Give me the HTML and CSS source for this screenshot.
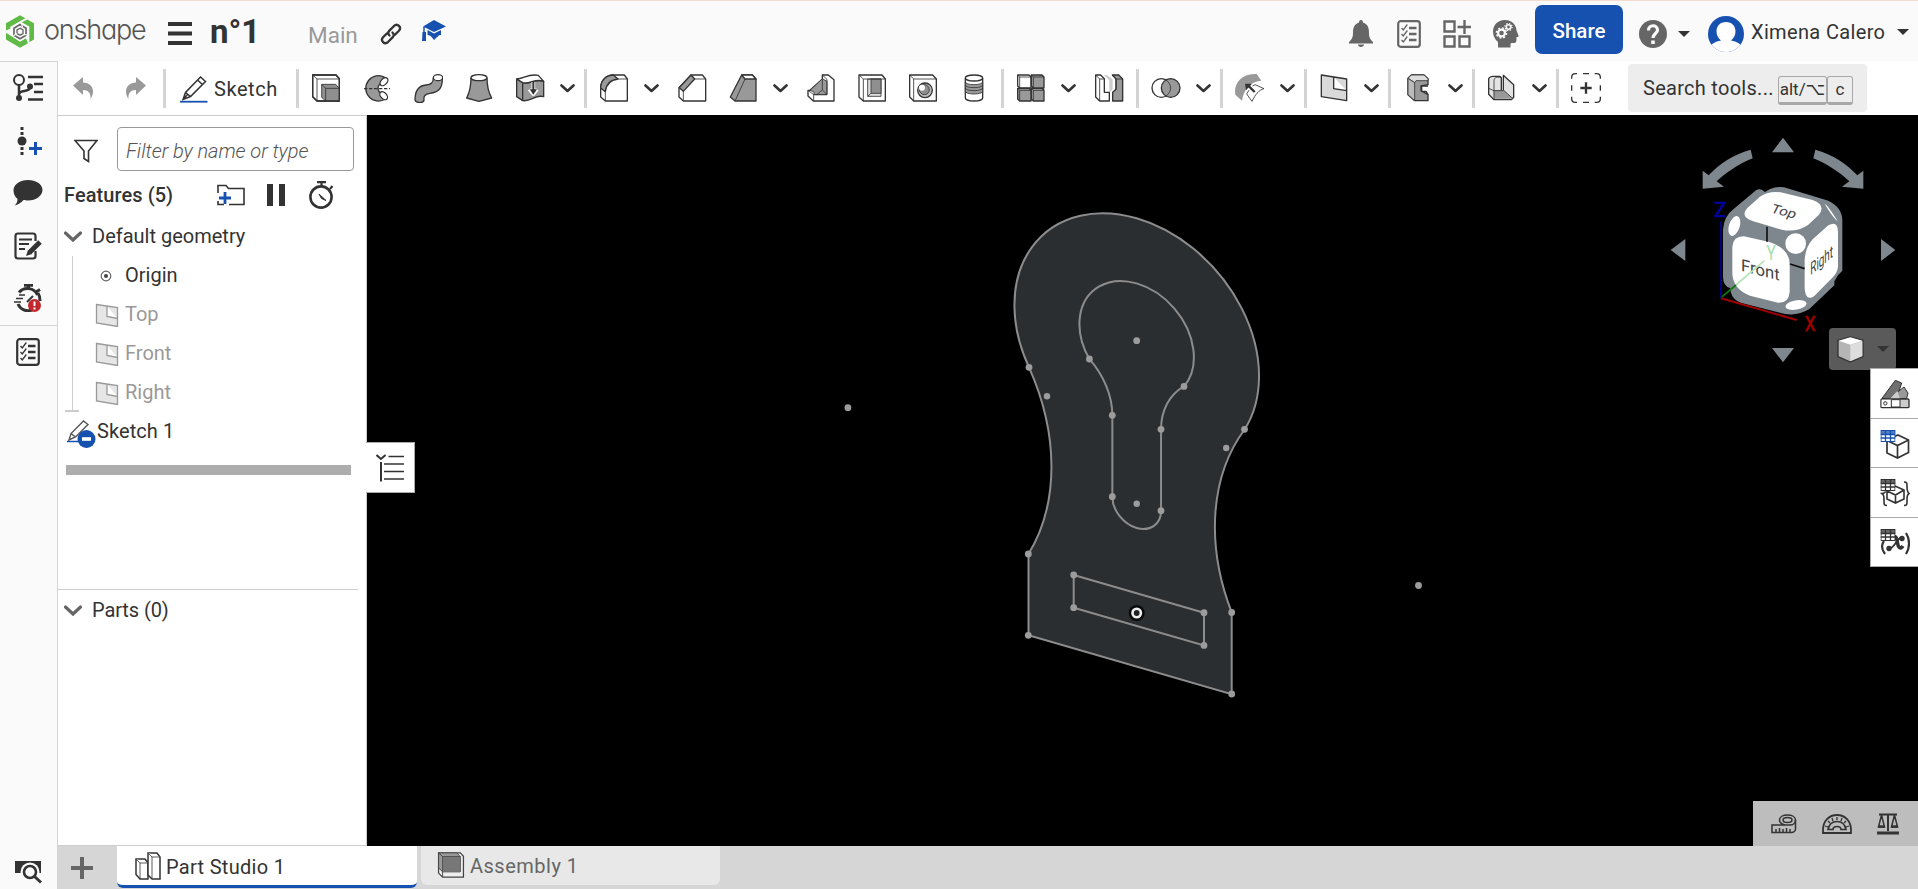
FILE: index.html
```
<!DOCTYPE html>
<html lang="en">
<head>
<meta charset="utf-8">
<title>n°1 | Part Studio 1</title>
<link rel="stylesheet" href="styles.css">
</head>
<body>
<svg class="defs" width="0" height="0">
  <symbol id="chev" viewBox="0 0 15 9"><path d="M1.5 1.5 7.5 7l6-5.500" fill="none" stroke="#333" stroke-width="2.600" stroke-linecap="round" stroke-linejoin="round"/></symbol>
  <symbol id="fold" viewBox="0 0 18 12"><path d="M1.500 2 9 9l7.500-7" fill="none" stroke="#666" stroke-width="3.200" stroke-linecap="round"/></symbol>
  <symbol id="plane" viewBox="0 0 24 24"><path d="M1.500 1.500 22.500 4.500V23.500L1.500 20zM12 3v10.500l10.500 2" fill="#e6e6e6" stroke="#999" stroke-width="1.300"/></symbol>
  <symbol id="list" viewBox="0 0 24 28"><rect x="1.200" y="1.200" width="21.600" height="25.600" rx="2.500" fill="none" stroke="currentColor" stroke-width="2.200"/><path d="M12 8h7.500M12 14h7.500M12 20h7.500" stroke="currentColor" stroke-width="2.600"/><path d="M4.500 8l1.800 2 4-5.500M4.500 14l1.800 2 4-5.500M4.500 20l1.800 2 4-5.500" fill="none" stroke="currentColor" stroke-width="1.300"/></symbol>
  <symbol id="grid" viewBox="0 0 15 12"><rect x=".5" y=".5" width="14" height="11" fill="#fff" stroke="currentColor"/><rect width="15" height="4.500" fill="currentColor" opacity=".75"/><path d="M0 4.500h15M0 8h15M5 0v12M10 0v12" stroke="currentColor" stroke-width="1.300"/></symbol>
</svg>

<header class="header">
  <div class="brand">
    <svg class="logo" width="28" height="33" viewBox="0 0 84 98"><path d="M0 46V24L42 0 58 9 13 35V40ZM64 13 84 24V73L70 81V34L47 21ZM0 53 42 80 60 69 66 84 42 98 0 73Z" fill="#5fbb46"/><path d="M42 28 60 39V60L42 71 24 60V39Z" fill="none" stroke="#666" stroke-width="5"/><path d="M42 39 51 44V55L42 60 33 55V44Z" fill="none" stroke="#666" stroke-width="4"/><path d="M46 24 50 36M66 60 53 58M22 62 33 55" stroke="#fafafa" stroke-width="3.500"/></svg>
    <span class="wordmark">onshape</span>
  </div>
  <svg class="burger" width="24" height="23"><path d="M0 2h24M0 11.500h24M0 21h24" stroke="#333" stroke-width="4"/></svg>
  <h1 class="doc">n°1</h1>
  <span class="branch">Main</span>
  <svg class="link" width="22" height="22" viewBox="0 0 22 22" fill="none" stroke="#333" stroke-width="2.300" stroke-linecap="round"><path d="M9.500 12.500C7.800 10.800 8 9 9.400 7.600L13.800 3.200C17.500-.3 22.200 4.400 18.700 8L15 11.600"/><path d="M12.500 9.500c1.700 1.700 1.500 3.500.1 4.900L8.200 18.800C4.500 22.300-.2 17.600 3.300 14L7 10.400"/></svg>
  <svg class="grad" width="24" height="22" viewBox="0 0 24 22" fill="#1651b0"><path d="M12 0 24 6.500 12 12 1 6.500zM5.500 10 12 13.500 19 10v5c-3 0-3 2-4.500 2.500L12 20l-2-2.500C8.500 16 8 15 5.500 15z"/><path d="M2 7v8" stroke="#1651b0" stroke-width="1.500"/><path d="M.500 12h3.500v9H0z"/></svg>
  <div class="account">
    <svg width="24" height="27" viewBox="0 0 24 27" fill="#666"><path d="M12 0c1.500 0 2 1 2 2.500 5 1.500 6 6 6 10 0 5 1 6.500 4 9.500v1.500H0V22c3-3 4-4.500 4-9.500 0-4 1-8.500 6-10C10 1 10.500 0 12 0zM9 24.500h6c0 1.500-1.300 2.500-3 2.500s-3-1-3-2.500z"/></svg>
    <svg class="gray i2" width="24" height="28"><use href="#list"/></svg>
    <svg class="i3" width="28" height="28" viewBox="0 0 28 28" fill="none" stroke="#666" stroke-width="2.400"><path d="M1.500 1.500h10v10h-10zM1.500 16.500h10v10h-10zM16.500 16.500h10v10h-10zM21.500 0v14M14.500 7h14"/></svg>
    <svg class="i4" width="26" height="28" viewBox="0 0 26 28"><path d="M11.500 0C19 0 23 4.500 23.500 10.500l2 5c.3 1-.5 1.500-2 1.500 0 3 0 5.500-1.500 6-1.500.5-4-1-4.500 1v3.500H5V22C2 19.500 0 16 0 11.500 0 5 5 0 11.500 0z" fill="#666"/><circle cx="8.500" cy="13" r="3.400" fill="none" stroke="#fafafa" stroke-width="2.200"/><circle cx="8.500" cy="13" r="5" fill="none" stroke="#fafafa" stroke-width="1.600" stroke-dasharray="2 1.900"/><circle cx="15.500" cy="7" r="2.200" fill="none" stroke="#fafafa" stroke-width="1.600"/><circle cx="15.500" cy="7" r="3.500" fill="none" stroke="#fafafa" stroke-width="1.300" stroke-dasharray="1.400 1.350"/></svg>
    <button class="share"><span>Share</span></button>
    <svg class="help" width="28" height="28" viewBox="0 0 28 28"><circle cx="14" cy="14" r="14" fill="#666"/><path d="M9.500 10.500C9.500 4 18.500 4.500 18.500 10c0 3.500-4.500 3.500-4.500 8" fill="none" stroke="#fafafa" stroke-width="3.200"/><path d="M12.200 20.500h3.600v3.500h-3.600z" fill="#fafafa"/></svg>
    <svg class="car1" width="12" height="6"><path d="M0 0h12L6 6z" fill="#333"/></svg>
    <svg class="avatar" width="36" height="36" viewBox="0 0 36 36"><clipPath id="av"><circle cx="18" cy="18" r="18"/></clipPath><g clip-path="url(#av)"><path d="M0 0h36v36H0z" fill="#1651b0"/><path d="M18 6c6 0 9.500 4 9.500 9.500 0 4-2 7-4.500 9 6 1 10 3.500 13 7.500v6H0v-6c3-4 7-6.500 13-7.500-2.500-2-4.500-5-4.500-9C8.500 10 12 6 18 6z" fill="#fff"/></g></svg>
    <span class="user">Ximena Calero</span>
    <svg class="car2" width="12" height="6"><path d="M0 0h12L6 6z" fill="#333"/></svg>
  </div>
</header>

<div class="main">
  <nav class="rail">
    <svg width="30" height="28" viewBox="0 0 30 28" fill="none" stroke="#333"><circle cx="6" cy="6" r="5" stroke-width="2"/><path d="M6 11v13M6 20c1-5 11-1 11-7" stroke-width="2.500"/><circle cx="6" cy="24" r="3" fill="#333" stroke="none"/><circle cx="17" cy="12.500" r="3" fill="#333" stroke="none"/><path d="M15 3h15M21 10h9M21 18h9M15 25.500h15" stroke-width="2.300"/></svg>
    <svg width="30" height="28" viewBox="0 0 30 28"><path d="M9 0v28" stroke="#333" stroke-width="3" stroke-dasharray="3 2"/><circle cx="9" cy="14" r="4.500" fill="#333"/><path d="M16 21.500h13M22.500 15v13" stroke="#1651b0" stroke-width="3"/></svg>
    <svg width="30" height="26" viewBox="0 0 30 26"><path d="M15 0c8 0 14.500 4.300 14.500 10S23 20.500 15 20.500c-2 0-3-.2-4.500-.5C8 23 5 24.500 1.500 25.500 3.500 24 4.500 22 4.500 19 2 17 .5 13.500.500 10.500.500 4.500 7 0 15 0z" fill="#333"/></svg>
    <svg width="30" height="28" viewBox="0 0 30 28" fill="none" stroke="#333"><path d="M22.500 9V4c0-2-1-2.500-2.500-2.500H5c-1.500 0-2.500.8-2.500 2.500v20c0 1.500 1 2.500 2.500 2.500h15c1.500 0 2.500-1 2.500-2.500v-5" stroke-width="2.200"/><path d="M6 7.500h13M6 12h10M6 17h6" stroke-width="2"/><path d="M27 10 16.500 20.500" stroke-width="5"/><path d="M13 24l2-6 4 4z" fill="#333" stroke="none"/></svg>
    <svg class="watch" width="30" height="28" viewBox="0 0 30 28" fill="none" stroke="#333"><path d="M6 8.500a11 11 0 0 1 18.500 2.500M5 20a11 11 0 0 0 14 6" stroke-width="3"/><path d="M11 1.300h9M15.500 1v4M23 8l4-2.500M25 9c2 3 2 5 2 8" stroke-width="3"/><path d="M6 11h6M3 14.500h7M1 18h7" stroke-width="1.600"/><path d="M14 18l6-6" stroke-width="2"/><circle cx="21.500" cy="21.500" r="6.500" fill="#c1272d" stroke="none"/><path d="M21.500 17.500v4.500M21.500 23.500v2" stroke="#fff" stroke-width="2"/></svg>
    <hr>
    <svg class="dark" width="24" height="28"><use href="#list"/></svg>
    <svg class="find" width="28" height="24" viewBox="0 0 28 24"><path d="M1 1h26v12H1z" fill="#333"/><circle cx="16" cy="12" r="9.500" fill="#fafafa"/><circle cx="16" cy="12" r="6" fill="none" stroke="#333" stroke-width="2.600"/><path d="M20 16l7 6.500" stroke="#333" stroke-width="3"/></svg>
  </nav>

  <div class="content">
    <div class="toolbar">
      <svg class="undo" width="20" height="22" viewBox="0 0 20 22"><path d="M0 8.500 10 0v5.500c7 0 10.500 5 10 10-.3 3-1.500 5-2.500 6.500.5-5-1.500-9-7.500-9V18z" fill="#999"/></svg>
      <svg class="redo" width="20" height="22" viewBox="0 0 20 22"><path d="M20 8.500 10 0v5.500c-7 0-10.500 5-10 10 .3 3 1.500 5 2.500 6.500-.5-5 1.500-9 7.500-9V18z" fill="#999"/></svg>
      <i class="sep s1"></i>
      <svg class="pencil" width="28" height="27" viewBox="0 0 28 27" fill="none" stroke="#333" stroke-width="1.500"><path d="M0 25.700h27.500" stroke="#1651b0" stroke-width="1.800"/><path d="M3 23.500 5.500 16.500 20.500 1 25.500 5.500 10.500 20.500zM17.500 4l5 4.500M5.500 16.500l5 4M7.500 18.500 3 23.500"/></svg>
      <span class="sk">Sketch</span>
      <i class="sep s2"></i>
      <svg class="t" viewBox="63 39 90 90"><path d="M68 45H138L148 56V123H81L68 110Z" fill="#fff"/><path d="M68 45 81 57H148M81 57V123" class="thin"/><path d="M95 73H137L148 85V123H107L95 112Z" fill="#8f8f8f" class="thin"/><path d="M95 73 107 85H148M107 85V123" class="thin"/><path d="M68 45H138L148 56V123H81L68 110Z"/></svg>
      <svg class="t" viewBox="216 39 90 90"><path d="M284 52A38 38 0 1 0 286 117L273 100A17 17 0 0 1 270 72Z" fill="#999"/><ellipse cx="282" cy="65" rx="14" ry="9" fill="#fff" transform="rotate(-48 282 65)"/><ellipse cx="281" cy="107" rx="14" ry="9" fill="#fff" transform="rotate(48 281 107)"/><path d="M222 86H300" stroke-dasharray="10 5"/></svg>
      <svg class="t" viewBox="369 39 90 90"><path d="M430 53C430 68 424 74 408 75 385 77 375 92 375 120 378 130 398 130 402 122 400 108 405 102 420 100 446 97 457 85 457 56" fill="#999"/><ellipse cx="444" cy="53" rx="14" ry="9" fill="#fff"/></svg>
      <svg class="t" viewBox="522 39 90 90"><path d="M543 53C543 80 538 98 530 114L567 124 605 114C596 98 591 80 591 53" fill="#999"/><ellipse cx="567" cy="53" rx="24" ry="9" fill="#fff"/></svg>
      <svg class="t" viewBox="675 39 90 90"><path d="M680 57 698 68V122L680 110ZM698 68C720 74 735 54 761 64V110C735 102 725 126 698 122Z" fill="#999"/><path d="M680 57C700 57 715 40 745 46L761 64C735 54 720 74 698 68Z" fill="#fff"/><path d="M730 66V96M718 88 730 102 742 88" stroke="#fff" stroke-width="11"/><path d="M730 66V92" stroke-width="6"/><path d="M719 88H741L730 104Z" fill="#333" stroke="none"/></svg>
      <svg class="c"><use href="#chev"/></svg>
      <i class="sep"></i>
      <svg class="t" viewBox="927 39 90 90"><path d="M932 84C932 60 950 45 970 45H1003L1012 57V123H946L932 111Z" fill="#fff"/><path d="M932 84C932 60 950 45 970 45L984 57C960 60 948 75 946 95Z" fill="#999"/><path d="M984 57H1012M946 95V123" class="thin"/></svg>
      <svg class="c"><use href="#chev"/></svg>
      <svg class="t" viewBox="1161 39 90 90"><path d="M1167 83 1203 45H1237L1247 57V123H1180L1167 111Z" fill="#fff"/><path d="M1168 83 1203 45 1214 57 1180 94Z" fill="#999"/><path d="M1214 57H1247M1180 94V123" class="thin"/></svg>
      <svg class="t" viewBox="24 39 90 90"><path d="M65 45H97L108 57V123H45L31 111Z" fill="#999"/><path d="M65 45H97L108 57H75Z" fill="#fff"/><path d="M75 57 45 123" class="thin"/></svg>
      <svg class="c"><use href="#chev"/></svg>
      <svg class="t" viewBox="258 39 90 90"><path d="M307 45H325L342 59V123H280L264 108V91H270L307 58Z" fill="#fff"/><path d="M270 91 307 56 321 64V104H282V96Z" fill="#999" class="thin"/><path d="M307 45 321 58V104H281L264 91M307 58V90L290 104M281 104V123M307 90 321 104" class="thin"/></svg>
      <svg class="t" viewBox="411 39 90 90"><path d="M417 45H486L496 57V123H430L417 111Z" fill="#fff"/><path d="M443 57H483V109H443Z" fill="#ddd" class="thin"/><path d="M453 57H483V100H453Z" fill="#8f8f8f" class="thin"/><path d="M417 45 430 57V123M430 57H496M443 109 453 100" class="thin"/></svg>
      <svg class="t" viewBox="564 39 90 90"><path d="M569 45H638L649 57V123H581L569 111Z" fill="#fff"/><path d="M569 45 581 57H649M581 57V123" class="thin"/><circle cx="615" cy="91" r="22" fill="#bbb"/><circle cx="613" cy="89" r="15" fill="#8f8f8f" class="thin"/><circle cx="606" cy="83" r="9" fill="#fff" stroke="none"/></svg>
      <svg class="t" viewBox="717 39 90 90"><path d="M736 54V114A26 9 0 0 0 788 114V54" fill="#fff"/><path d="M736 66A26 8 0 0 0 788 66V94A26 8 0 0 1 736 94Z" fill="#999" class="thin"/><path d="M736 75A26 8 0 0 0 788 75M736 84A26 8 0 0 0 788 84" class="thin"/><ellipse cx="762" cy="54" rx="26" ry="9" fill="#fff"/></svg>
      <i class="sep"></i>
      <svg class="t" viewBox="888 39 90 90"><path d="M893 45H927L933 51V84H899L893 78Z" fill="#fff"/><path d="M934 45H966L972 51V84H940L934 78ZM893 85H927L933 91V123H899L893 117ZM934 85H966L972 91V123H940L934 117Z" fill="#999"/><path d="M893 45l6 6H933M899 51V84M934 45l6 6H972M940 51V84M893 85l6 6H933M899 91V123M934 85l6 6H972M940 91V123" class="thin"/></svg>
      <svg class="c"><use href="#chev"/></svg>
      <svg class="t" viewBox="1122 39 90 90"><path d="M1152 45 1168 60V98L1178 88V58L1160 45Z" fill="#ccc" stroke="none"/><path d="M1127 45H1142L1153 56V97H1168V123H1139L1127 111Z" fill="#fff"/><path d="M1127 45 1139 57H1153M1139 57V123" class="thin"/><path d="M1177 45H1196L1208 57V123H1178V97L1188 88V57Z" fill="#999"/><path d="M1177 45 1188 57H1208M1188 57V88" class="thin"/></svg>
      <i class="sep"></i>
      <svg class="t" viewBox="33 39 90 90"><circle cx="64" cy="84" r="28" fill="#fff"/><circle cx="92" cy="84" r="28" fill="#999"/><path d="M78 60A28 28 0 0 1 78 108" class="thin"/></svg>
      <svg class="c"><use href="#chev"/></svg>
      <i class="sep"></i>
      <svg class="t" viewBox="285 39 90 90"><path d="M286 104C280 72 304 38 350 42L364 62C334 64 312 84 306 122Z" fill="#999" stroke="none"/><path d="M345 74 372 86C356 90 346 104 336 124L320 102C328 88 335 78 345 74Z" fill="#fff" stroke="none"/><path d="M345 74 372 86C356 90 346 104 336 124L320 102C328 88 335 78 345 74Z" class="thin"/><path d="M344 96 326 78" stroke="#fff" stroke-width="14"/><path d="M344 96 324 76" stroke-width="7"/><path d="M315 71H336L318 91Z" fill="#333" stroke="none"/></svg>
      <svg class="c"><use href="#chev"/></svg>
      <i class="sep"></i>
      <svg class="t" viewBox="540 39 90 90"><path d="M547 45 623 57V122L547 110ZM584 51V86L623 92" fill="#d9d9d9"/></svg>
      <svg class="c"><use href="#chev"/></svg>
      <i class="sep"></i>
      <svg class="t" viewBox="789 39 90 90"><path d="M804 55 814 45H852L864 56V74L843 78V92L864 104V122H824L804 104Z" fill="#999"/><path d="M804 55 814 45H852L864 56V62H828L824 68 804 55Z" fill="#ddd" class="thin"/><path d="M804 55 824 68V122L804 104Z" fill="#bbb" class="thin"/><path d="M864 78H845V94H858L864 104" fill="#fff"/></svg>
      <svg class="c"><use href="#chev"/></svg>
      <i class="sep"></i>
      <svg class="t" viewBox="1041 39 90 90"><path d="M1046 58C1046 50 1052 50 1060 49H1080L1084 54V92H1090V46L1121 74V112L1114 119H1062L1046 103Z" fill="#e3e3e3"/><path d="M1060 90H1090L1119 116H1062Z" fill="#999" stroke="none"/><path d="M1084 52C1066 50 1062 54 1062 64V119M1046 85 1062 92H1090M1090 90 1119 116" class="thin"/></svg>
      <svg class="c"><use href="#chev"/></svg>
      <i class="sep"></i>
      <svg class="t" viewBox="1293 39 90 90"><path d="M1295 56V52Q1295 41 1306 41H1311M1329 41H1347M1364 41H1370Q1381 41 1381 52V56M1381 76V92M1381 110V116Q1381 127 1370 127H1364M1347 127H1329M1311 127H1306Q1295 127 1295 116V110M1295 92V76"/><path d="M1321 84H1355M1338 67V101" stroke-width="7"/></svg>
      <div class="search"><span class="q">Search tools...</span><kbd class="k1">alt/⌥</kbd><kbd class="k2">c</kbd></div>
    </div>

    <div class="work">
      <aside class="panel">
        <div class="filter">
          <svg width="24" height="24" viewBox="0 0 24 24"><path d="M1 1.500h22L14.500 12v10.500L10 19.500V12z" fill="none" stroke="#333" stroke-width="1.600"/></svg>
          <div class="input"><span>Filter by name or type</span></div>
        </div>
        <div class="fhead">
          <span class="ft">Features (5)</span>
          <svg class="fold" width="28" height="22" viewBox="0 0 28 22"><path d="M1 9V1.500h8l2.500 3H27v16H12M1 17v3.500h6" fill="none" stroke="#333" stroke-width="1.600"/><path d="M2 14h12M8 8v12" stroke="#1651b0" stroke-width="2.800"/></svg>
          <svg class="pause" width="18" height="22"><path d="M0 0h6v22H0zM12 0h6v22h-6z" fill="#333"/></svg>
          <svg class="timer" width="25" height="28" viewBox="0 0 25 28" fill="none" stroke="#333"><circle cx="12" cy="16" r="10.600" stroke-width="2.600"/><path d="M8 1.200h9M12.500 1v4M21 8l2.500-3" stroke-width="2.200"/><path d="M10 13l7 6.500-4.500-2z" fill="#333" stroke-width="1"/></svg>
        </div>
        <div class="row"><svg class="fo" width="18" height="12"><use href="#fold"/></svg><span class="a1">Default geometry</span></div>
        <div class="tree">
          <div class="row sub"><svg width="24" height="24" viewBox="0 0 24 24"><circle cx="11" cy="12" r="4.800" fill="none" stroke="#666" stroke-width="1.200"/><circle cx="11" cy="12" r="2" fill="#444"/></svg><span class="a2">Origin</span></div>
          <div class="row sub off"><svg width="24" height="24"><use href="#plane"/></svg><span class="a3">Top</span></div>
          <div class="row sub off"><svg width="24" height="24"><use href="#plane"/></svg><span class="a4">Front</span></div>
          <div class="row sub off"><svg width="24" height="24"><use href="#plane"/></svg><span class="a5">Right</span></div>
        </div>
        <div class="row sketch"><svg width="30" height="28" viewBox="0 0 30 28"><path d="M1 21.500h12" stroke="#1651b0" stroke-width="1.500"/><path d="M3 20 5 13.500 17.500 1 22 4.500 9.500 17zM5 13.500l4.500 3.500" fill="none" stroke="#555" stroke-width="1.400"/><circle cx="20.500" cy="19" r="9" fill="#1651b0"/><path d="M16 17.200h9v3.600h-9z" fill="#fff"/></svg><span class="a6">Sketch 1</span></div>
        <div class="rollback"></div>
        <div class="parts"><svg class="fo" width="18" height="12"><use href="#fold"/></svg><span class="a7">Parts (0)</span></div>
      </aside>
      <div class="canvas">
        <svg class="scene" width="1551" height="731" viewBox="367 115 1551 731">
          <g transform="matrix(1 .29 0 1 1136.700 340.700)" stroke="#8c8c8c" fill="none">
            <path class="ns" fill="#2b2e31" d="M-107.800 57.600A122.300 122.300 0 1 1 107.900 57.500A203.400 203.400 0 0 0 95 244.200V326L-108.200 326V244.600A203.500 203.500 0 0 0 -107.800 57.600Z"/>
            <path class="ns" d="M-47.400 32A57.200 57.200 0 1 1 47.300 32A65.200 65.200 0 0 0 24.350 81.700V163A24.350 24.350 0 0 1 -24.350 163V81.700A65.200 65.200 0 0 0 -47.400 32ZM-63 252.600H67.300V285.200H-63Z"/>
          </g>
          <g fill="#9c9c9c"><circle cx="1029" cy="367.300" r="3.400"/><circle cx="1244.500" cy="429.300" r="3.400"/><circle cx="1028.300" cy="554" r="3.400"/><circle cx="1231.700" cy="612.500" r="3.400"/><circle cx="1028.300" cy="635.300" r="3.400"/><circle cx="1231.700" cy="694" r="3.400"/><circle cx="1089.400" cy="359" r="3.400"/><circle cx="1184" cy="386.400" r="3.400"/><circle cx="1112.300" cy="415.300" r="3.400"/><circle cx="1161" cy="429.300" r="3.400"/><circle cx="1112.300" cy="496.700" r="3.400"/><circle cx="1161" cy="510.700" r="3.400"/><circle cx="1136.700" cy="340.700" r="3.400"/><circle cx="1136.700" cy="503.700" r="3.200"/><circle cx="1047" cy="396.300" r="3.200"/><circle cx="1226.200" cy="448" r="3.200"/><circle cx="1073.700" cy="575" r="3.400"/><circle cx="1204" cy="612.700" r="3.400"/><circle cx="1073.700" cy="607.700" r="3.400"/><circle cx="1204" cy="645.400" r="3.400"/><circle cx="847.900" cy="407.700" r="3.400"/><circle cx="1418.500" cy="585.500" r="3.400"/></g>
          <circle cx="1136.700" cy="613" r="8" fill="#08090a"/><circle cx="1136.700" cy="613" r="4.200" fill="#222" stroke="#eee" stroke-width="2.600"/>
        </svg>
        <button class="fly"><svg width="28" height="28" viewBox="0 0 28 28" fill="none" stroke="#333" stroke-width="1.500"><path d="M.5 1 5 5 9.500 1" stroke-width="2"/><path d="M12.500 2.500H28M8 10H28M8 17.500H28M8 25H28"/><path d="M5 8v19.500" stroke-width="2"/></svg></button>
        <svg class="cube" width="268" height="260" viewBox="0 0 804 780">
          <g fill="#7f878e"><path d="M399 53 432 97H366ZM62 390 106 357V423ZM736 390 693 357V423ZM399 727 366 684H432Z"/><path d="M302 89 308 115C265 132 228 158 200 184L222 200 158 206V152L176 166C205 134 250 103 302 89ZM496 89 490 115C533 132 570 158 598 184L576 200 640 206V152L622 166C593 134 548 103 496 89Z"/>
          <path d="M318 211Q332 202 345 216L360 207Q380 198 402 202L535 242Q576 262 577 300V452L564 466 553 484V496L478 567Q445 588 405 582L272 548Q248 538 243 518L240 504Q219 498 219 470V330Q222 288 250 268Z"/></g>
          <g fill="#fff"><path d="M330 230Q355 212 392 217L488 240Q530 256 506 285L474 315Q440 338 395 329L310 304Q268 290 292 264Z"/><path d="M282 349 358 366Q418 385 419 432V515Q416 550 384 548L300 527Q250 508 247 462V380Q250 348 282 349Z"/><path d="M535 316Q563 300 564 335V440Q562 458 547 473L492 529Q466 545 464 505V420Q466 382 488 358Z"/><circle cx="437" cy="371" r="31"/><ellipse cx="253" cy="318" rx="16" ry="31" transform="rotate(18 253 318)"/><ellipse cx="438" cy="555" rx="32" ry="14" transform="rotate(-10 438 555)"/><path d="M524 252Q534 256 563 304Q548 292 524 252Z"/></g>
          <path d="M351 320V365M420 432 464 446" stroke="#111" stroke-width="5"/>
          <g fill="#444" font-family="Roboto" text-anchor="middle"><text transform="matrix(1 .26 -.4 .8 396 286)" font-size="44">Top</text><text transform="matrix(1 .25 0 1 331 467)" font-size="50">Front</text><text transform="matrix(.66 -.55 0 1.150 515 438)" font-size="45">Right</text></g>
          <g fill="none" stroke-width="5"><path d="M213 533 258 495" stroke="#087808"/><path d="M258 495 343 422" stroke="#b5e3b5"/><path d="M213 305V533" stroke="#0000a0"/><path d="M213 535 440 600" stroke="#a00000" stroke-width="6"/></g>
          <g font-family="Roboto" font-size="60"><text x="193" y="290" fill="#0000a0" stroke="#0000a0" stroke-width="2">Z</text><text transform="matrix(.85 0 0 1.050 464 634)" fill="#a00000" stroke="#a00000" stroke-width="2">X</text><text transform="matrix(.8 0 0 1 349 420)" fill="#a9dfa9">Y</text></g>
        </svg>
        <button class="shade"><svg width="27" height="27" viewBox="0 0 81 81"><path d="M3 13 40 3 78 13V62L40 78 3 62Z" fill="#b5b5b5" stroke="#333" stroke-width="4"/><path d="M5 14 40 4 76 14 40 26Z" fill="#fff"/><path d="M40 26 76 15V60L40 75Z" fill="#ddd"/></svg><svg width="12" height="6"><path d="M0 0h12L6 6z" fill="#333"/></svg></button>
        <div class="side">
          <div><svg width="30" height="30" viewBox="0 0 90 90" stroke="#333" stroke-width="3"><path d="M6 58 46 4 65 12 56 40 30 60Z" fill="#707070"/><path d="M26 60 72 24 84 42 80 58Z" fill="#999"/><path d="M28 60 52 36 60 60Z" fill="#ccc" stroke="none"/><rect x="3" y="60" width="84" height="26" rx="3" fill="#ccc" stroke-width="4"/><path d="M5 62H34V84H5Z" fill="#fff" stroke="none"/><path d="M34 62V84H60V62Z" fill="#fff"/><circle cx="16" cy="73" r="5" fill="none"/></svg></div>
          <div><svg class="blue" width="30" height="30" viewBox="0 0 30 30"><path d="M18 6 28.500 11V23.500L17.500 29 7 24V11ZM7 11.500 17.500 16.500 28.500 11M17.500 16.500V29" fill="#fff" stroke="#333" stroke-width="1.700"/><use href="#grid" x="0.500" y="1" width="15" height="12"/></svg></div>
          <div><svg class="dark" width="30" height="30" viewBox="0 0 30 30"><path d="M15 8 24 12V21L15.500 25 7 21V12ZM7 13 15.500 17 24 12M15.500 17V25" fill="#fff" stroke="#333" stroke-width="1.600"/><path d="M24 4c3 0 3 1 3 4 0 4 0 6 2 7.500-2 1.500-2 3-2 8 0 3 0 4-3 4M6 14c-2 0-2 0-2 1-1 .5-1 .5-2 .5 2 1.500 2 3 2 8 0 3 0 4 3 4" fill="none" stroke="#333" stroke-width="1.600"/><use href="#grid" x="0.500" y="1" width="15" height="12"/></svg></div>
          <div><svg class="dark" width="30" height="30" viewBox="0 0 30 30"><path d="M26 5c4 6 4 15 0 21M4 13c-3 4-2 9 1 13" fill="none" stroke="#333" stroke-width="2.200"/><path d="M12 10c4-4 5 1 5.500 5s3 7 5.500 3" fill="none" stroke="#333" stroke-width="3.500"/><path d="M8 21c6 1 9-12 14-11.500" fill="none" stroke="#333" stroke-width="1.800"/><circle cx="9" cy="20.500" r="2.700" fill="#333"/><circle cx="22" cy="10.500" r="2.700" fill="#333"/><use href="#grid" x="0.500" y="1" width="15" height="12"/></svg></div>
        </div>
        <div class="measure">
          <svg width="26" height="20" viewBox="0 0 26 20" fill="none" stroke="#333" stroke-width="1.500"><path d="M1 11h13c-4-1-5.500-3-5.500-5 0-3 3.500-5 8-5s8 2 8 5v9c0 2-2 3.500-4 3.500H1z"/><ellipse cx="16.500" cy="6" rx="4.500" ry="2.500"/><path d="M14 11h5c3 0 5.500-2 5.500-5M5 18v-3M8.500 18v-4M12 18v-3M15.500 18v-4M19 18v-3"/></svg>
          <svg width="30" height="20" viewBox="0 0 30 20" fill="none" stroke="#333"><path d="M1 19v-3C1 7 7 1 15 1s14 6 14 15v3z" stroke-width="1.800"/><path d="M15 3v3M10 4l1 3M20 4l-1 3M6 7l2 2M24 7l-2 2M3 12l3 1M27 12l-3 1" stroke-width="1.300"/><path d="M6 15.500c1-5 4-8 9-8s8 3 9 8h-5c0-4-8-4-8 0z" stroke-width="1.700"/></svg>
          <svg width="22" height="22" viewBox="0 0 22 22" fill="none" stroke="#333"><path d="M2 1.500h18M11 1v17" stroke-width="2"/><path d="M4.500 2 1.500 14h6zM17.500 2l-3 12h6z" stroke-width="1.500"/><path d="M0 20h22" stroke-width="3"/><path d="M1 13.500h7M14 13.500h7" stroke-width="2.500"/></svg>
        </div>
      </div>
    </div>

    <footer class="tabs">
      <div class="add"><svg width="22" height="22"><path d="M0 11h22M11 0v22" stroke="#666" stroke-width="4"/></svg></div>
      <div class="tab on"><svg width="26" height="28" viewBox="0 0 26 28" fill="#fff" stroke="#333" stroke-width="1.500"><path d="M1 7h9l3 4v16H5L1 22.500z"/><path d="M13 1h9l3 4v22H17l-4-4z"/><path d="M1 7l4 4h8M5 11v16M13 1l4 4h8M17 5v22" stroke-width=".8"/></svg><span class="a8">Part Studio 1</span></div>
      <div class="tab"><svg width="28" height="28" viewBox="63 39 90 90" fill="none" stroke="#444" stroke-width="4"><path d="M68 45H138L148 56V123H81L68 110Z" fill="#eee"/><path d="M68 45H126L138 57V106H81L68 93Z" fill="#999" stroke-width="3"/><path d="M68 45 81 57H138M81 57V123" stroke-width="3"/><path d="M82 58H137V105H82Z" fill="#777" stroke="none"/></svg><span class="a9">Assembly 1</span></div>
    </footer>
  </div>
</div>
</body>
</html>
```
FILE: styles.css
```
* { box-sizing: border-box; }
body { margin: 0; width: 1918px; height: 889px; overflow: hidden; display: flex; flex-direction: column; font: 20px/24px Roboto, "Liberation Sans", sans-serif; color: #333; background: #fff; }
svg { display: block; flex: none; }
.defs { position: absolute; }
span { white-space: nowrap; }
button { border: 0; padding: 0; font: inherit; }
.dark { color: #333; }
.gray { color: #666; }
.blue { color: #1651b0; }

/* header */
.header { height: 61px; flex: none; display: flex; align-items: flex-start; background: #fafafa; border-top: 1px solid #f4dbd0; padding-left: 6px; }
.brand { display: flex; width: 162px; padding-top: 14px; }
.wordmark { margin: -2px 0 0 10px; font: 300 27px/34px Inter, sans-serif; font-feature-settings: "cv11"; letter-spacing: -1.200px; color: #555; }
.burger { margin-top: 21px; }
.doc { margin: 11px 0 0 18px; width: 98px; font-size: 33px; line-height: 40px; font-weight: 700; white-space: nowrap; }
.branch { margin-top: 20px; width: 72px; font-size: 22.500px; line-height: 28px; color: #999; }
.link { margin-top: 22px; }
.grad { margin: 19px 0 0 20px; }
.account { display: flex; align-items: flex-start; margin-left: auto; width: 569px; padding-top: 19px; }
.i2 { margin-left: 24px; }
.i3 { margin-left: 22px; }
.i4 { margin-left: 22px; }
.share { margin: -15px 0 0 16px; width: 88px; height: 49px; border-radius: 7px; background: #1651b0; color: #fff; font-size: 20.500px; font-weight: 500; padding-top: 2px; }
.help { margin-left: 16px; }
.car1 { margin: 11px 0 0 11px; }
.avatar { margin: -4px 0 0 18px; }
.user { margin: 0 0 0 7px; width: 146px; letter-spacing: .35px; }
.car2 { margin-top: 9px; }

/* body split */
.main { flex: 1; display: flex; min-height: 0; }
.rail { width: 58px; flex: none; display: flex; flex-direction: column; align-items: center; background: #fafafa; border: solid #d4d4d4; border-width: 1px 1px 0 0; padding: 12px 1px 5px 0; }
.rail svg { margin-bottom: 25px; }
.rail svg:nth-child(3) { margin-bottom: 26px; }
.rail svg:nth-child(4) { margin-bottom: 24px; }
.rail .watch { margin-bottom: 13px; }
.rail hr { width: 57px; height: 1px; border: 0; margin: 0 -1px 12px 0; background: #d4d4d4; flex: none; }
.rail .find { margin: auto 0 0; }
.content { flex: 1; display: flex; flex-direction: column; min-width: 0; }

/* toolbar */
.toolbar { height: 54px; flex: none; display: flex; align-items: center; padding-left: 15px; }
.undo { margin-right: 33px; }
.redo { margin-right: 15.500px; }
.sep { flex: none; width: 6px; height: 39px; background: linear-gradient(#d4d4d4, #d4d4d4) 1.500px 0 / 3px 39px no-repeat; }
.s1 { margin-right: 12.500px; }
.pencil { margin: 2px 6px 0 0; }
.sk { width: 80.500px; padding-top: 1px; letter-spacing: .55px; }
.t { width: 30px; height: 30px; margin: 0 10.500px; fill: none; stroke: #333; stroke-width: 4; stroke-linejoin: round; }
.t .thin { stroke-width: 2.500; }
.c { width: 15px; height: 9px; margin: 0 7.500px 0 4.500px; }
.search { margin-left: 16.500px; width: 239px; height: 48px; display: flex; align-items: center; background: #ededed; border-radius: 4px; padding: 0 0 0 15px; }
.q { width: 135px; letter-spacing: .28px; }
kbd { height: 29px; border: 1px solid #a8a8a8; border-bottom-width: 3px; border-radius: 3px; margin-top: 5px; font: 17px/25px Roboto, "DejaVu Sans", sans-serif; text-align: center; white-space: nowrap; }
.k1 { width: 49px; }
.k2 { width: 26px; }

/* feature panel */
.work { flex: 1; display: flex; min-height: 0; }
.panel { width: 309px; flex: none; border: solid #ccc; border-width: 1px 1px 1px 0; }
.filter { display: flex; padding: 11px 0 0 16px; }
.filter svg { margin: 12px 19px 0 0; }
.input { width: 237px; height: 44px; border: 1px solid #999; border-radius: 4px; padding: 11px 0 0 8px; font-style: italic; font-weight: 300; letter-spacing: -.05px; color: #555; }
.fhead { display: flex; align-items: flex-start; height: 46px; padding: 11px 0 0 6px; }
.ft { width: 153px; margin-top: 1px; font-weight: 500; letter-spacing: .08px; }
.fold { margin-top: 2px; }
.pause { margin: 2px 0 0 22px; }
.timer { margin: -1px 0 0 24px; }
.row { display: flex; align-items: center; height: 39px; padding-left: 6px; }
.row span, .parts span { position: relative; top: -1px; }
.fo { margin-right: 10px; }
.tree { position: relative; height: 156px; }
.tree::before { content: ""; position: absolute; left: 14px; top: 0; width: 1px; height: 155px; background: #ccc; }
.tree::after { content: ""; position: absolute; left: 7px; top: 154px; width: 14px; height: 2px; background: #ccc; }
.sub { padding-left: 37px; }
.sub svg { margin-right: 6px; }
.off { color: #999; }
.sketch { padding-left: 8px; }
.sketch svg { margin: 5px 1px 0 0; }
.a6 { letter-spacing: .08px; }
.rollback { width: 285px; height: 10px; margin: 14px 0 0 8px; background: #adadad; }
.parts { display: flex; align-items: center; width: 300px; margin-top: 114px; height: 42px; padding-left: 6px; border-top: 1px solid #ccc; }
.a7 { letter-spacing: -.1px; }

/* graphics area */
.canvas { position: relative; flex: 1; background: #000; }
.scene .ns { vector-effect: non-scaling-stroke; stroke-width: 2; }
.fly { position: absolute; left: -1px; top: 327px; width: 49px; height: 51px; display: flex; align-items: center; padding-left: 10px; background: #fff; border: 1px solid #aaa; border-left: 0; }
.cube { position: absolute; left: 1283px; top: 5px; }
.shade { position: absolute; left: 1462px; top: 213px; width: 67px; height: 42px; display: flex; align-items: center; gap: 13px; padding-left: 8px; background: #5a5a5a; border-radius: 4px; }
.side { position: absolute; left: 1503px; top: 253px; width: 48px; border: solid #aaa; border-width: 1px 0 0 1px; background: #fff; }
.side div { height: 49.500px; padding: 10px 0 0 9px; border-bottom: 1px solid #aaa; }
.measure { position: absolute; right: 0; bottom: 0; width: 165px; height: 45px; display: flex; align-items: center; padding-left: 18px; gap: 25px; background: #bdbdbd; }

/* document tabs */
.tabs { height: 43px; flex: none; display: flex; background: #d6d6d6; }
.add { width: 59px; display: flex; align-items: center; justify-content: center; padding-right: 11px; }
.tab { display: flex; align-items: center; width: 299px; height: 39px; margin-right: 4px; padding: 0 0 0 16px; background: #e8e8e8; border-radius: 0 0 6px 6px; color: #666; }
.tab svg { margin: -2px 5px 0 0; }
.tab.on { width: 300px; height: 42px; padding: 2px 0 0 18px; background: #fff; border-bottom: 3px solid #1651b0; color: #333; }
.a8 { letter-spacing: .3px; }
.a9 { letter-spacing: .5px; }
```
